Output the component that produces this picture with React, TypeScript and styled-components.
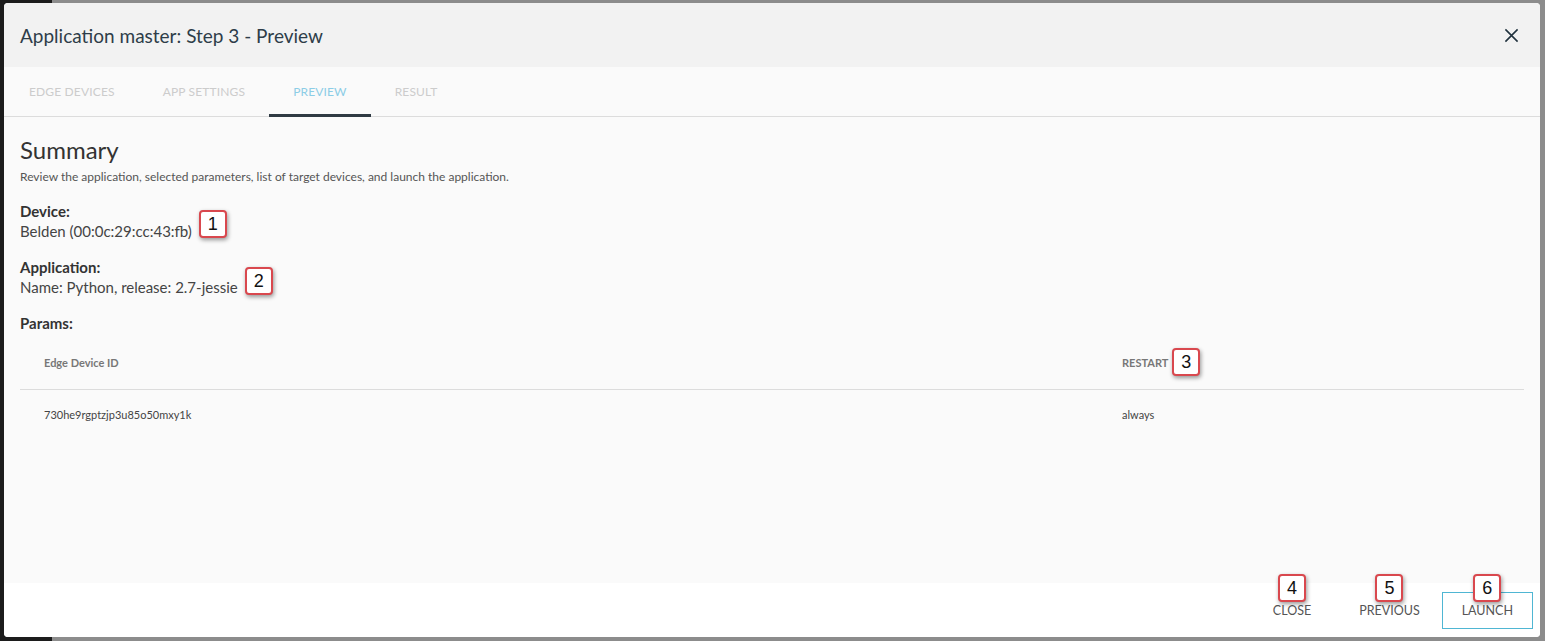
import styled, { createGlobalStyle } from 'styled-components';

const GlobalStyle = createGlobalStyle`
  html, body {
    margin: 0;
    padding: 0;
    height: 100%;
  }
  body {
    background: linear-gradient(to right, #1c1c1c 0, #1c1c1c 52px, #8c8c8c 52px);
    font-family: 'Lato', 'Liberation Sans', sans-serif;
    overflow: hidden;
  }
`;

const Screen = styled.div`
  width: 1545px;
  height: 641px;
  box-sizing: border-box;
  padding: 3px 5px 4px 4px;
`;

const Modal = styled.div`
  height: 100%;
  display: flex;
  flex-direction: column;
  background: #fafafa;
  border-radius: 4px;
  overflow: hidden;
`;

const Header = styled.div`
  height: 64px;
  flex: none;
  display: flex;
  align-items: center;
  justify-content: space-between;
  padding: 0 21px 0 16px;
  background: #f2f2f2;
`;

const Title = styled.h1`
  margin: 0;
  font-size: 19px;
  font-weight: 400;
  color: #2e3d49;
`;

const CloseButton = styled.button`
  border: 0;
  background: none;
  padding: 0;
  display: flex;
  color: #22333f;
  cursor: pointer;
`;

const Tabs = styled.div`
  height: 49px;
  flex: none;
  display: flex;
  padding-left: 1px;
  border-bottom: 1px solid #dcdcdc;
`;

const Tab = styled.div<{ $active?: boolean }>`
  display: flex;
  align-items: center;
  padding: 0 24px;
  font-size: 12px;
  letter-spacing: 0.15px;
  text-transform: uppercase;
  color: ${(p) => (p.$active ? '#8ccde6' : '#cccccc')};
  border-bottom: 3px solid ${(p) => (p.$active ? '#2f3a43' : 'transparent')};
  margin-bottom: -1px;
  padding-top: 2px;
`;

const Body = styled.div`
  flex: 1;
  padding: 17px 16px 0 16px;
  color: #444;
`;

const Heading = styled.h2`
  margin: 0;
  font-size: 24px;
  line-height: 32px;
  font-weight: 400;
  color: #333;
`;

const Description = styled.p`
  margin: 3px 0 0;
  font-size: 12px;
  line-height: 16px;
  color: #555;
`;

const Field = styled.div`
  margin-top: 16px;
  font-size: 15px;
  line-height: 20px;
`;

const Label = styled.div`
  font-weight: 700;
  color: #333;
`;

const Value = styled.div`
  color: #444;
`;

const Marked = styled.span`
  position: relative;
  display: inline-block;
`;

const Badge = styled.span<{ $top?: number; $gap?: number }>`
  position: absolute;
  top: ${(p) => p.$top ?? 0}px;
  left: calc(100% + ${(p) => p.$gap ?? 0}px);
  width: 28px;
  height: 28px;
  box-sizing: border-box;
  display: flex;
  align-items: center;
  justify-content: center;
  background: #fff;
  border: 2px solid #d9484e;
  border-radius: 4px;
  box-shadow: 1px 2px 4px rgba(0, 0, 0, 0.4);
  font-family: 'Liberation Sans', Arial, sans-serif;
  font-size: 18px;
  font-weight: 400;
  color: #111;
  text-transform: none;
  letter-spacing: 0;
`;

const ButtonBadge = styled(Badge)`
  top: -19px;
  left: 50%;
  transform: translateX(-50%);
`;

const Table = styled.div`
  margin-top: 5px;
`;

const TableRow = styled.div<{ $head?: boolean }>`
  display: grid;
  grid-template-columns: 1078px 1fr;
  height: ${(p) => (p.$head ? '52px' : '50px')};
  padding-bottom: ${(p) => (p.$head ? '2px' : '0')};
  box-sizing: border-box;
  align-items: center;
  border-bottom: ${(p) => (p.$head ? '1px solid #dcdcdc' : '0')};
  font-size: 11px;
  font-weight: ${(p) => (p.$head ? 700 : 400)};
  color: ${(p) => (p.$head ? '#777' : '#444')};
`;

const Cell = styled.div`
  padding-left: 24px;
  line-height: 14px;
`;

const Footer = styled.div`
  height: 54px;
  flex: none;
  background: #fff;
  display: flex;
  align-items: center;
  justify-content: flex-end;
  gap: 8px;
  padding-right: 7px;
`;

const FooterButton = styled.button<{ $primary?: boolean }>`
  position: relative;
  height: 37px;
  margin-top: 1px;
  margin-left: ${(p) => (p.$primary ? '-6px' : '0')};
  padding: 0 19px;
  background: transparent;
  border: 1px solid ${(p) => (p.$primary ? '#4fb6d3' : 'transparent')};
  font-family: 'Lato', 'Liberation Sans', sans-serif;
  font-size: 12.5px;
  text-transform: uppercase;
  color: #555;
  cursor: pointer;
`;

const CloseIcon = () => (
  <svg width="15" height="15" viewBox="0 0 16 16" fill="none">
    <path d="M1.5 1.5 14.5 14.5M14.5 1.5 1.5 14.5" stroke="currentColor" strokeWidth="1.7" />
  </svg>
);

const tabs = ['Edge devices', 'App settings', 'Preview', 'Result'];

export default function App() {
  return (
    <Screen>
      <GlobalStyle />
      <Modal>
        <Header>
          <Title>Application master: Step 3 - Preview</Title>
          <CloseButton aria-label="close">
            <CloseIcon />
          </CloseButton>
        </Header>
        <Tabs>
          {tabs.map((tab) => (
            <Tab key={tab} $active={tab === 'Preview'}>
              {tab}
            </Tab>
          ))}
        </Tabs>
        <Body>
          <Heading>Summary</Heading>
          <Description>
            Review the application, selected parameters, list of target devices, and launch the application.
          </Description>
          <Field>
            <Label>Device:</Label>
            <Value>
              <Marked>
                Belden (00:0c:29:cc:43:fb)
                <Badge $top={-11} $gap={7}>1</Badge>
              </Marked>
            </Value>
          </Field>
          <Field>
            <Label>Application:</Label>
            <Value>
              <Marked>
                Name: Python, release: 2.7-jessie
                <Badge $top={-10} $gap={7}>2</Badge>
              </Marked>
            </Value>
          </Field>
          <Field>
            <Label>Params:</Label>
          </Field>
          <Table>
            <TableRow $head>
              <Cell>Edge Device ID</Cell>
              <Cell>
                <Marked>
                  RESTART
                  <Badge $top={-8} $gap={4}>3</Badge>
                </Marked>
              </Cell>
            </TableRow>
            <TableRow>
              <Cell>730he9rgptzjp3u85o50mxy1k</Cell>
              <Cell>always</Cell>
            </TableRow>
          </Table>
        </Body>
        <Footer>
          <FooterButton>
            Close
            <ButtonBadge>4</ButtonBadge>
          </FooterButton>
          <FooterButton>
            Previous
            <ButtonBadge>5</ButtonBadge>
          </FooterButton>
          <FooterButton $primary>
            Launch
            <ButtonBadge>6</ButtonBadge>
          </FooterButton>
        </Footer>
      </Modal>
    </Screen>
  );
}
